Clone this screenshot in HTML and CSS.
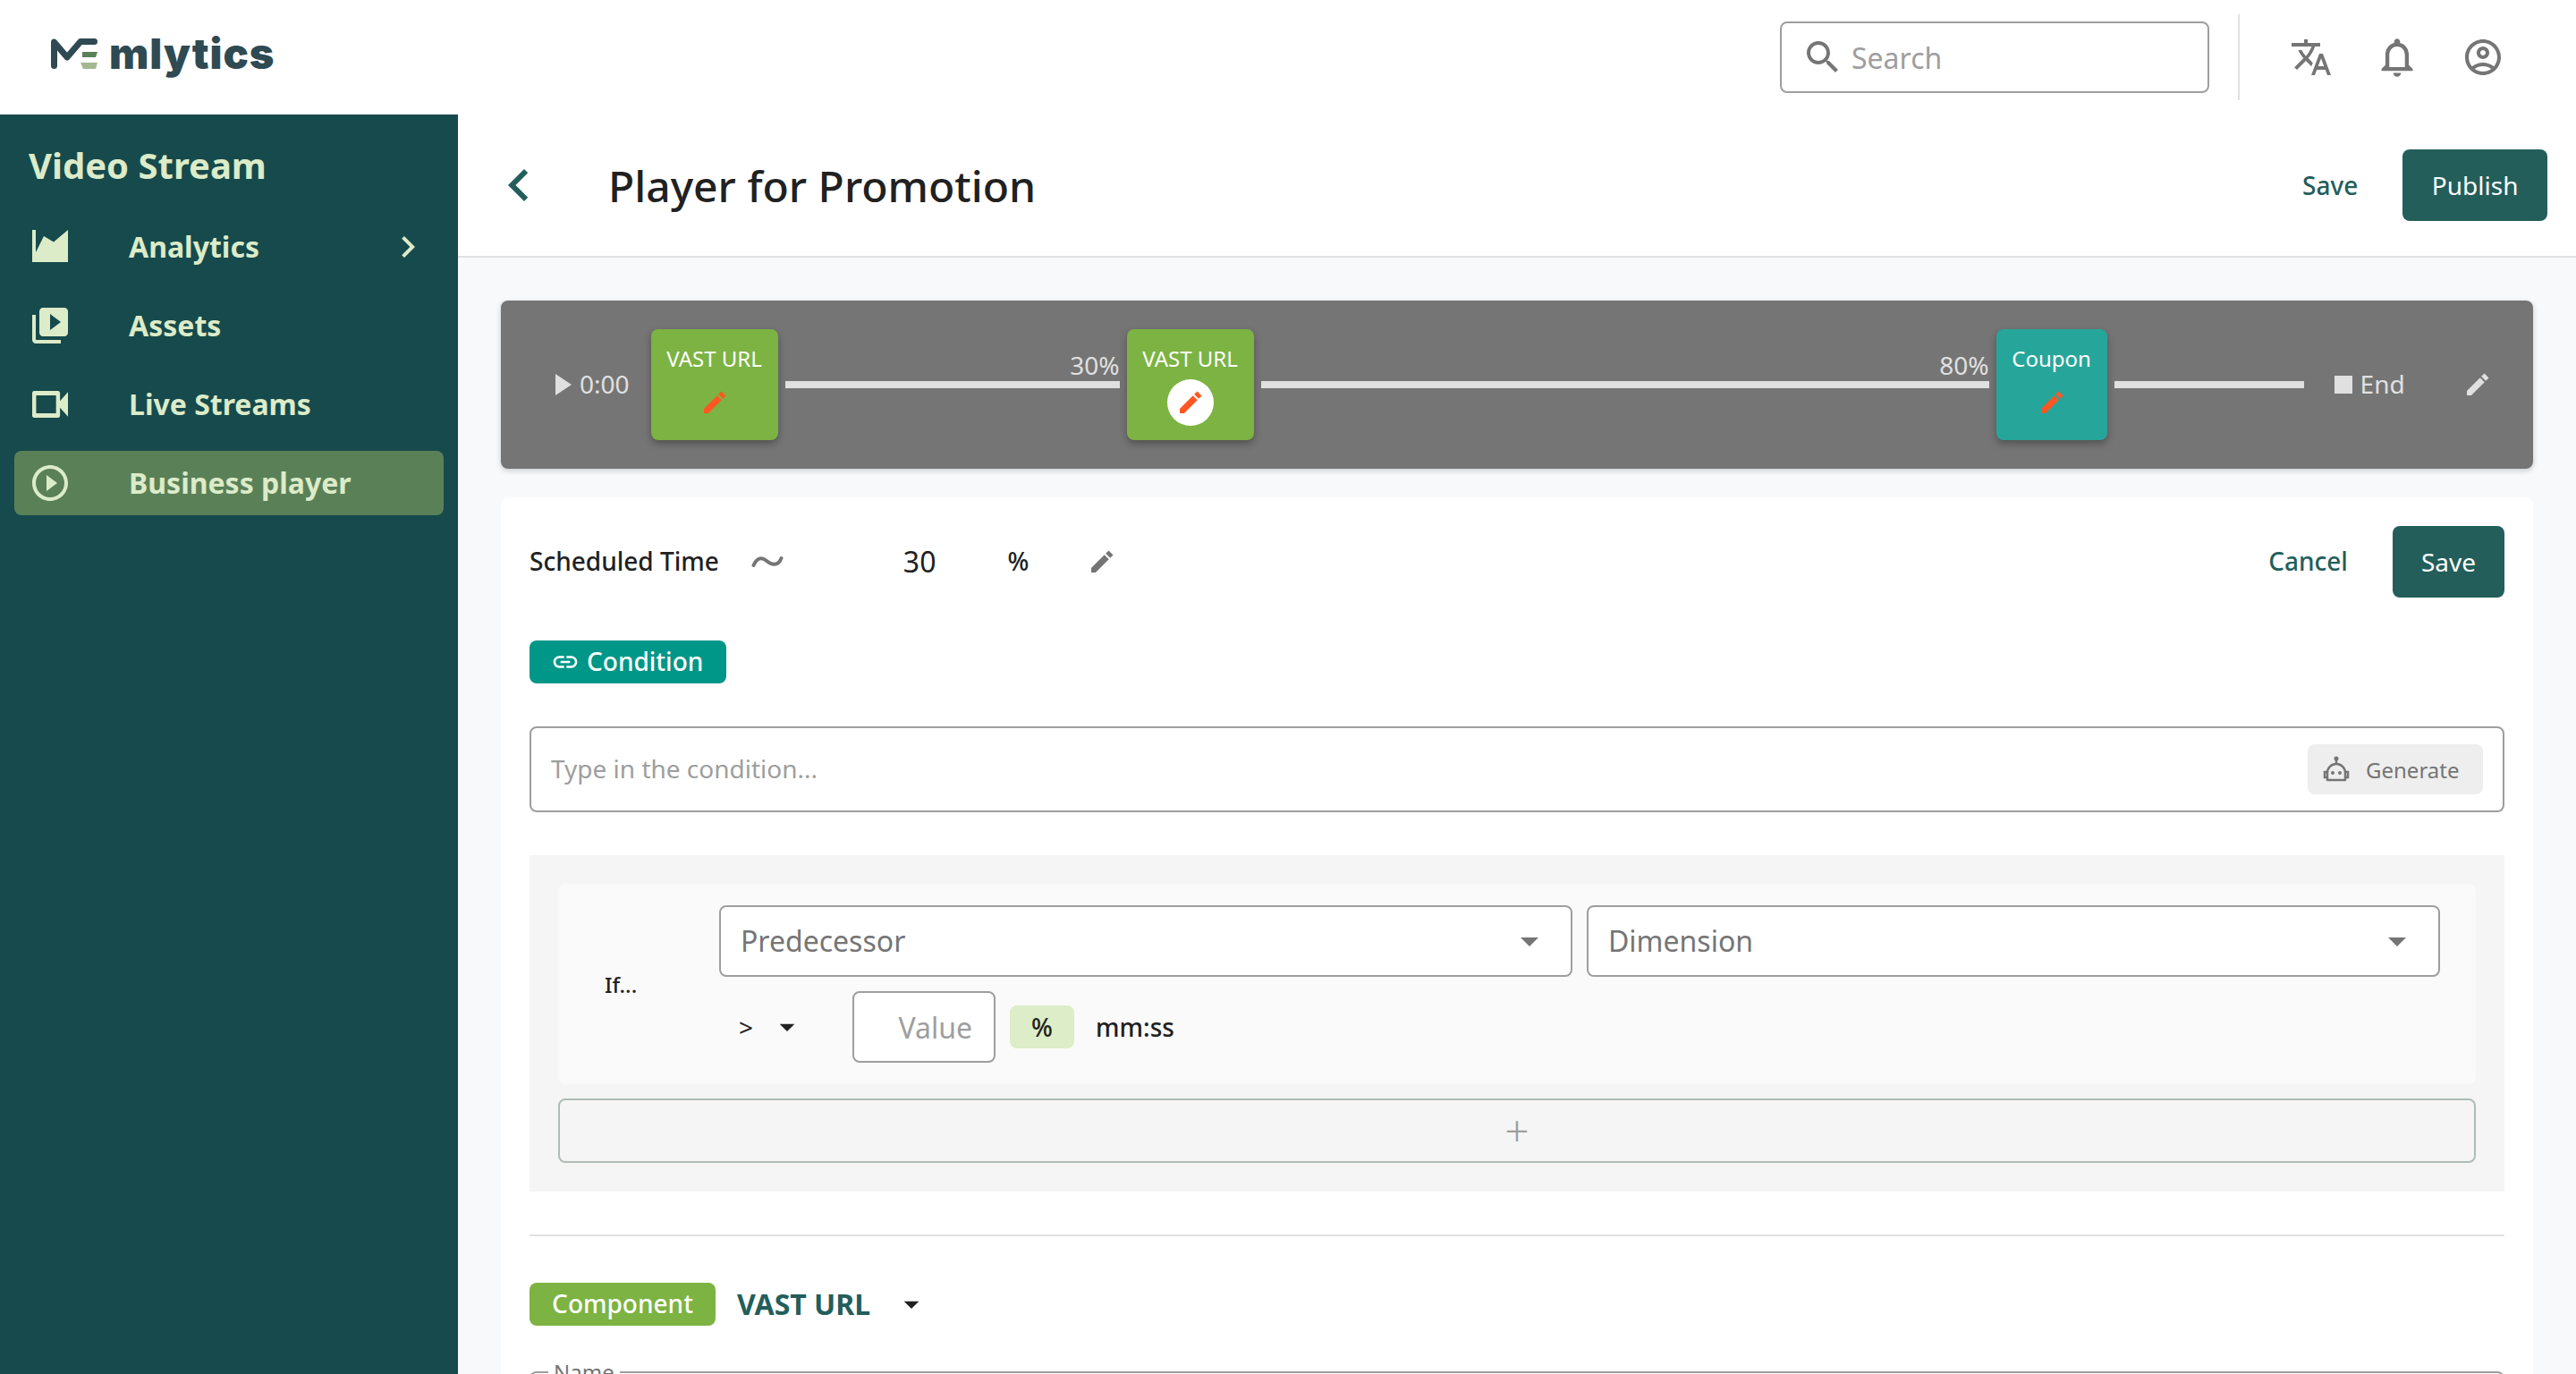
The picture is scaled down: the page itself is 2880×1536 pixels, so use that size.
FILE: index.html
```html
<!DOCTYPE html>
<html lang="en">
<head>
    <meta charset="UTF-8">
    <title>Player for Promotion</title>
    <link rel="stylesheet" href="styles.css">
</head>
<body>
    <header class="topbar">
        <div class="logo">
            <svg class="logo-mark" viewBox="0 0 52 34">
                <path d="M3.500 30.500V4l14.500 17L33 3.500h15.500" fill="none" stroke="#2f4a52" stroke-width="7" stroke-linecap="round" stroke-linejoin="round"/>
                <path d="M35 15h17l-2 6H35z" fill="#5a8058"/>
                <path d="M33 27h19l-2 7H36z" fill="#a5b88f"/>
            </svg>
            <span class="logo-text">mlytics</span>
        </div>
        <div class="topbar-right">
            <div class="search">
                <svg class="icon-48 grey" viewBox="0 0 24 24"><path d="M15.5 14h-.79l-.28-.27C15.41 12.59 16 11.11 16 9.5 16 5.91 13.09 3 9.5 3S3 5.91 3 9.5 5.91 16 9.5 16c1.61 0 3.09-.59 4.23-1.57l.27.28v.79l5 4.99L20.49 19l-4.99-5zm-6 0C7.01 14 5 11.99 5 9.5S7.01 5 9.5 5 14 7.01 14 9.5 11.99 14 9.5 14z"/></svg>
                <input type="text" placeholder="Search">
            </div>
            <div class="topbar-divider"></div>
            <div class="topbar-icons">
                <svg class="icon-48 grey" viewBox="0 0 24 24"><path d="M12.87 15.07l-2.54-2.51.03-.03c1.74-1.94 2.98-4.17 3.71-6.53H17V4h-7V2H8v2H1v1.99h11.17C11.5 7.92 10.44 9.75 9 11.35 8.07 10.32 7.3 9.19 6.69 8h-2c.73 1.63 1.73 3.17 2.98 4.56l-5.09 5.02L4 19l5-5 3.11 3.11.76-2.04zM18.5 10h-2L12 22h2l1.12-3h4.75L21 22h2l-4.5-12zm-2.62 7l1.62-4.33L19.12 17h-3.24z"/></svg>
                <svg class="icon-48 grey" viewBox="1 1 22 22"><path d="M12 22c1.1 0 2-.9 2-2h-4c0 1.1.9 2 2 2zm6-6v-5c0-3.07-1.63-5.64-4.5-6.32V4c0-.83-.67-1.5-1.5-1.5s-1.5.67-1.5 1.5v.68C7.64 5.36 6 7.92 6 11v5l-2 2v1h16v-1l-2-2zm-2 1H8v-6c0-2.48 1.51-4.5 4-4.5s4 2.02 4 4.5v6z"/></svg>
                <svg class="icon-48 grey" viewBox="0 0 24 24"><path d="M12 2C6.48 2 2 6.48 2 12s4.48 10 10 10 10-4.48 10-10S17.52 2 12 2zM7.35 18.5C8.66 17.56 10.26 17 12 17s3.34.56 4.65 1.5c-1.31.94-2.91 1.5-4.65 1.5s-3.34-.56-4.65-1.5zm10.79-1.38C16.45 15.8 14.32 15 12 15s-4.45.8-6.14 2.12C4.7 15.73 4 13.95 4 12c0-4.42 3.58-8 8-8s8 3.58 8 8c0 1.95-.7 3.73-1.86 5.12zM12 6c-1.93 0-3.5 1.57-3.5 3.5S10.07 13 12 13s3.5-1.57 3.5-3.5S13.93 6 12 6zm0 5c-.83 0-1.5-.67-1.5-1.5S11.17 8 12 8s1.5.67 1.5 1.5S12.83 11 12 11z"/></svg>
            </div>
        </div>
    </header>

    <div class="layout">
        <nav class="sidebar">
            <div class="sidebar-title">Video Stream</div>
            <a class="nav-item">
                <svg class="icon-48 pale" viewBox="0 0 48 48"><path d="M4 5h4v25l9-18 11 6.500L44 5v36H4z"/></svg>
                <span class="nav-label">Analytics</span>
                <svg class="icon-48 pale" viewBox="0 0 24 24"><path d="M10 6L8.590 7.410 13.170 12l-4.580 4.590L10 18l6-6z"/></svg>
            </a>
            <a class="nav-item">
                <svg class="icon-48 pale" viewBox="0 0 24 24"><path d="M4 6H2v14c0 1.100.9 2 2 2h14v-2H4V6zm16-4H8c-1.100 0-2 .9-2 2v12c0 1.100.9 2 2 2h12c1.100 0 2-.9 2-2V4c0-1.100-.9-2-2-2zm-8 12.500v-9l6 4.500-6 4.500z"/></svg>
                <span class="nav-label">Assets</span>
            </a>
            <a class="nav-item">
                <svg class="icon-48 pale" viewBox="1.200 2.400 21.600 19.200" preserveAspectRatio="none"><path d="M17 10.500V7c0-.55-.45-1-1-1H4c-.55 0-1 .45-1 1v10c0 .55.45 1 1 1h12c.55 0 1-.45 1-1v-3.500l4 4v-11l-4 4zM15 16H5V8h10v8z"/></svg>
                <span class="nav-label">Live Streams</span>
            </a>
            <a class="nav-item active">
                <svg class="icon-48 pale" viewBox="0 0 24 24"><path d="M10 16.500l6-4.500-6-4.500v9zM12 2C6.480 2 2 6.480 2 12s4.480 10 10 10 10-4.480 10-10S17.520 2 12 2zm0 18c-4.410 0-8-3.590-8-8s3.590-8 8-8 8 3.590 8 8-3.590 8-8 8z"/></svg>
                <span class="nav-label">Business player</span>
            </a>
        </nav>

        <main class="content">
            <div class="page-head">
                <svg class="back-icon" viewBox="0 0 24 24"><path d="M15.410 7.410L14 6l-6 6 6 6 1.410-1.410L10.830 12z"/></svg>
                <h1 class="page-title">Player for Promotion</h1>
                <button class="btn-text btn-save-top">Save</button>
                <button class="btn-primary btn-publish">Publish</button>
            </div>

            <div class="page-body">
                <div class="timeline">
                    <svg class="play-mark" viewBox="0 0 18 24"><path d="M0 0l18 12L0 24z"/></svg>
                    <span class="time-text start-time">0:00</span>
                    <div class="block green block-first">
                        <span class="block-label">VAST URL</span>
                        <span class="block-edit"><svg class="icon-32 orange" viewBox="0 0 24 24"><path d="M3 17.250V21h3.750L17.810 9.940l-3.750-3.750L3 17.250zM21.410 6.340l-3.750-3.750-2.530 2.540 3.750 3.750 2.530-2.540z"/></svg></span>
                    </div>
                    <div class="track track-a"><span class="track-pct">30%</span></div>
                    <div class="block green">
                        <span class="block-label">VAST URL</span>
                        <span class="block-edit selected"><svg class="icon-32 orange" viewBox="0 0 24 24"><path d="M3 17.250V21h3.750L17.810 9.940l-3.750-3.750L3 17.250zM21.410 6.340l-3.750-3.750-2.530 2.540 3.750 3.750 2.530-2.540z"/></svg></span>
                    </div>
                    <div class="track track-b"><span class="track-pct">80%</span></div>
                    <div class="block teal">
                        <span class="block-label">Coupon</span>
                        <span class="block-edit"><svg class="icon-32 orange" viewBox="0 0 24 24"><path d="M3 17.250V21h3.750L17.810 9.940l-3.750-3.750L3 17.250zM21.410 6.340l-3.750-3.750-2.530 2.540 3.750 3.750 2.530-2.540z"/></svg></span>
                    </div>
                    <div class="track track-c"></div>
                    <span class="stop-mark"></span>
                    <span class="time-text">End</span>
                    <svg class="icon-32 timeline-edit" viewBox="0 0 24 24"><path d="M3 17.250V21h3.750L17.810 9.940l-3.750-3.750L3 17.250zM21.410 6.340l-3.750-3.750-2.530 2.540 3.750 3.750 2.530-2.540z"/></svg>
                </div>

                <section class="panel">
                    <div class="schedule-row">
                        <span class="schedule-label">Scheduled Time</span>
                        <svg class="tilde" viewBox="0 0 36 20"><path d="M2.500 14C6 6 11 4 17 9s13 6 16.500-3" fill="none" stroke="#757575" stroke-width="4" stroke-linecap="round"/></svg>
                        <span class="schedule-value">30</span>
                        <span class="schedule-unit">%</span>
                        <svg class="icon-32 grey schedule-edit" viewBox="0 0 24 24"><path d="M3 17.250V21h3.750L17.810 9.940l-3.750-3.750L3 17.250zM21.410 6.340l-3.750-3.750-2.530 2.540 3.750 3.750 2.530-2.540z"/></svg>
                        <button class="btn-text btn-cancel">Cancel</button>
                        <button class="btn-primary">Save</button>
                    </div>

                    <div class="chip-row">
                        <span class="chip chip-condition">
                            <svg class="icon-32 white" viewBox="0 0 24 24"><path d="M3.900 12c0-1.710 1.390-3.100 3.100-3.100h4V7H7c-2.760 0-5 2.240-5 5s2.240 5 5 5h4v-1.900H7c-1.710 0-3.100-1.390-3.100-3.100zM8 13h8v-2H8v2zm9-6h-4v1.900h4c1.710 0 3.100 1.390 3.100 3.100s-1.390 3.100-3.100 3.100h-4V17h4c2.760 0 5-2.240 5-5s-2.240-5-5-5z"/></svg>
                            Condition
                        </span>
                    </div>

                    <div class="condition-input">
                        <input type="text" placeholder="Type in the condition...">
                        <button class="btn-generate">
                            <svg class="robot" viewBox="0 0 32 32">
                                <g fill="none" stroke="#757575" stroke-width="2.500">
                                    <path d="M16 5v5"/>
                                    <path d="M6 28V20a10 10 0 0 1 20 0v8z" stroke-linejoin="round"/>
                                    <path d="M6 19H3v6h3M26 19h3v6h-3"/>
                                </g>
                                <g fill="#757575">
                                    <circle cx="16" cy="4" r="2.500"/>
                                    <circle cx="12" cy="20" r="2"/>
                                    <circle cx="20" cy="20" r="2"/>
                                </g>
                            </svg>
                            Generate
                        </button>
                    </div>

                    <div class="rule-box">
                        <div class="rule-card">
                            <span class="rule-if">If...</span>
                            <div class="rule-fields">
                                <div class="rule-selects">
                                    <div class="select">
                                        <span>Predecessor</span>
                                        <svg class="icon-48 grey" viewBox="0 0 24 24"><path d="M7 10l5 5 5-5z"/></svg>
                                    </div>
                                    <div class="select">
                                        <span>Dimension</span>
                                        <svg class="icon-48 grey" viewBox="0 0 24 24"><path d="M7 10l5 5 5-5z"/></svg>
                                    </div>
                                </div>
                                <div class="rule-compare">
                                    <span class="compare-op">&gt;</span>
                                    <svg class="icon-40 dark" viewBox="0 0 24 24"><path d="M7 10l5 5 5-5z"/></svg>
                                    <input class="value-input" type="text" placeholder="Value">
                                    <span class="unit-chip">%</span>
                                    <span class="unit-text">mm:ss</span>
                                </div>
                            </div>
                        </div>
                        <button class="btn-add">+</button>
                    </div>

                    <hr class="panel-divider">

                    <div class="component-row">
                        <span class="chip chip-component">Component</span>
                        <span class="component-name">VAST URL</span>
                        <svg class="icon-40 dark" viewBox="0 0 24 24"><path d="M7 10l5 5 5-5z"/></svg>
                    </div>

                    <fieldset class="name-field">
                        <legend>Name</legend>
                    </fieldset>
                </section>
            </div>
        </main>
    </div>
</body>
</html>
```

FILE: styles.css
```css
* {
    box-sizing: border-box;
}
html, body {
    height: 100%;
}
body {
    margin: 0;
    overflow: hidden;
    font-family: "Noto Sans", sans-serif;
    font-size: 28px;
    color: #212121;
    background: #fff;
}
input, button {
    font-family: inherit;
}
svg {
    flex: none;
    display: block;
    fill: currentColor;
}
.icon-48 { width: 48px; height: 48px; }
.icon-40 { width: 40px; height: 40px; }
.icon-32 { width: 32px; height: 32px; }
.grey { color: #757575; }
.pale { color: #dcebc8; }
.orange { color: #ff5722; }
.white { color: #fff; }
.dark { color: #212121; }

/* top bar */
.topbar {
    height: 128px;
    display: flex;
    align-items: center;
    justify-content: space-between;
    padding: 0 80px 0 57px;
}
.logo {
    display: flex;
    align-items: center;
    gap: 13px;
    margin-bottom: 8px;
}
.logo-mark {
    width: 52px;
    height: 34px;
}
.logo-text {
    font-family: Inter, sans-serif;
    font-size: 47px;
    font-weight: 900;
    line-height: 44px;
    letter-spacing: 1px;
    color: #2f4a52;
}
.topbar-right {
    display: flex;
    align-items: center;
}
.search {
    width: 480px;
    height: 80px;
    display: flex;
    align-items: center;
    gap: 6px;
    padding: 0 22px;
    border: 2px solid #9e9e9e;
    border-radius: 8px;
}
.search input {
    flex: 1;
    min-width: 0;
    border: none;
    outline: none;
    font-size: 32px;
    background: none;
}
input::placeholder {
    color: #9e9e9e;
    opacity: 1;
}
.topbar-divider {
    width: 2px;
    height: 96px;
    margin: 0 56px 0 32px;
    background: #e0e0e0;
}
.topbar-icons {
    display: flex;
    gap: 48px;
}

/* sidebar */
.layout {
    height: 1408px;
    display: flex;
}
.sidebar {
    width: 512px;
    flex: none;
    padding: 29px 16px 0;
    background: #164a4c;
    color: #dcebc8;
}
.sidebar-title {
    height: 56px;
    margin-bottom: 27px;
    padding-left: 16px;
    font-size: 40px;
    font-weight: 700;
    line-height: 56px;
}
.nav-item {
    height: 72px;
    display: flex;
    align-items: center;
    gap: 64px;
    margin-bottom: 16px;
    padding: 0 16px;
    border-radius: 8px;
}
.nav-item.active {
    background: #5a8058;
}
.nav-label {
    flex: 1;
    padding-bottom: 2px;
    font-size: 32px;
    font-weight: 700;
}

/* page heading */
.content {
    flex: 1;
    min-width: 0;
    display: flex;
    flex-direction: column;
    background: #f8f9fb;
}
.page-head {
    height: 160px;
    flex: none;
    display: flex;
    align-items: center;
    padding: 0 32px;
    background: #fff;
    border-bottom: 2px solid #e0e0e0;
}
.back-icon {
    width: 72px;
    height: 72px;
    color: #235e5b;
}
.page-title {
    flex: 1;
    margin: 0 0 0 64px;
    font-size: 48px;
    font-weight: 500;
}
.btn-primary {
    height: 80px;
    padding: 0 32px;
    border: none;
    border-radius: 8px;
    font-size: 28px;
    color: #fff;
    background: #235e5b;
}
.btn-publish {
    padding: 0 32.5px;
}
.btn-text {
    padding: 0;
    border: none;
    font-size: 28px;
    font-weight: 500;
    color: #235e5b;
    background: none;
}
.btn-save-top {
    margin-right: 50px;
}

/* timeline */
.page-body {
    padding: 48px 48px 0;
}
.timeline {
    height: 188px;
    display: flex;
    align-items: center;
    padding: 0 46px 0 61px;
    border-radius: 8px;
    background: #757575;
    box-shadow: 0 2px 6px rgba(0, 0, 0, 0.2);
}
.play-mark {
    width: 18px;
    height: 24px;
    color: #e0e0e0;
}
.time-text {
    margin-left: 9px;
    padding-bottom: 2px;
    font-size: 28px;
    color: #e0e0e0;
}
.start-time {
    margin-right: 24px;
}
.block {
    width: 142px;
    height: 124px;
    flex: none;
    display: flex;
    flex-direction: column;
    align-items: center;
    padding-top: 15px;
    border-radius: 8px;
    color: #fff;
    box-shadow: 0 4px 8px rgba(0, 0, 0, 0.3);
}
.green { background: #7cb342; }
.teal { background: #26a69a; width: 124px; }
.block-label {
    height: 36px;
    font-size: 24px;
    line-height: 36px;
}
.block-edit {
    width: 52px;
    height: 52px;
    margin-top: 5px;
    display: flex;
    align-items: center;
    justify-content: center;
    border-radius: 50%;
}
.block-edit.selected {
    background: #fff;
}
.track {
    position: relative;
    height: 8px;
    flex: none;
    margin: 0 8px;
    background: #e0e0e0;
}
.track-a { width: 374px; }
.track-b { width: 814px; }
.track-c { width: 212px; }
.track-pct {
    position: absolute;
    right: 0;
    bottom: 8px;
    font-size: 28px;
    line-height: 36px;
    color: #e0e0e0;
}
.stop-mark {
    width: 20px;
    height: 20px;
    margin-left: 26px;
    background: #e0e0e0;
}
.timeline-edit {
    margin-left: auto;
    color: #e0e0e0;
}

/* condition panel */
.panel {
    margin-top: 32px;
    padding: 32px;
    border-radius: 8px;
    background: #fff;
}
.schedule-row {
    height: 80px;
    display: flex;
    align-items: center;
}
.schedule-label, .schedule-value, .schedule-unit, .btn-cancel {
    padding-bottom: 2px;
    font-weight: 500;
}
.schedule-value {
    font-weight: 400;
}
.tilde {
    width: 36px;
    height: 20px;
    margin-left: 36px;
}
.schedule-value {
    margin-left: 134px;
    font-size: 32px;
}
.schedule-unit {
    margin-left: 80px;
}
.schedule-edit {
    margin-left: 66px;
}
.btn-cancel {
    margin-left: auto;
    margin-right: 50px;
}
.chip-row {
    margin-top: 48px;
    display: flex;
}
.chip {
    height: 48px;
    display: flex;
    align-items: center;
    padding-bottom: 2px;
    border-radius: 8px;
    font-size: 28px;
    font-weight: 500;
    color: #fff;
}
.chip-condition {
    gap: 8px;
    padding-left: 24px;
    padding-right: 26px;
    background: #009688;
}
.chip-condition svg {
    margin-top: 2px;
}
.condition-input {
    height: 96px;
    margin-top: 48px;
    display: flex;
    align-items: center;
    padding: 0 22px;
    border: 2px solid #9e9e9e;
    border-radius: 8px;
}
.condition-input input {
    flex: 1;
    min-width: 0;
    padding: 0 0 2px;
    border: none;
    outline: none;
    font-size: 28px;
}
.btn-generate {
    width: 196px;
    height: 56px;
    display: flex;
    align-items: center;
    gap: 17px;
    padding: 0 16px;
    border: none;
    border-radius: 8px;
    font-size: 24px;
    color: #757575;
    background: #eee;
}
.robot {
    width: 32px;
    height: 32px;
}
.rule-box {
    margin-top: 48px;
    padding: 32px;
    background: #f5f5f5;
}
.rule-card {
    display: flex;
    align-items: center;
    padding: 24px 40px 24px 52px;
    border-radius: 8px;
    background: #fafafa;
}
.rule-if {
    width: 128px;
    flex: none;
    font-size: 24px;
    font-weight: 500;
}
.rule-fields {
    flex: 1;
    min-width: 0;
}
.rule-selects {
    display: flex;
    gap: 16px;
}
.select {
    flex: 1;
    height: 80px;
    display: flex;
    align-items: center;
    justify-content: space-between;
    padding: 0 22px 0 22px;
    border: 2px solid #9e9e9e;
    border-radius: 8px;
    font-size: 32px;
    color: #757575;
    background: #fff;
}
.select span {
    padding-bottom: 2px;
}
.rule-compare {
    height: 80px;
    margin-top: 16px;
    display: flex;
    align-items: center;
}
.compare-op {
    margin-left: 22px;
    margin-right: 18px;
    font-size: 28px;
}
.value-input {
    width: 160px;
    height: 80px;
    margin-left: 53px;
    padding: 0 24px 0 0;
    border: 2px solid #9e9e9e;
    border-radius: 8px;
    outline: none;
    text-align: right;
    font-size: 32px;
}
.unit-chip {
    width: 72px;
    height: 48px;
    margin: 0 24px 0 16px;
    display: flex;
    align-items: center;
    justify-content: center;
    border-radius: 8px;
    font-weight: 500;
    background: #dcedc8;
}
.unit-text {
    font-weight: 500;
}
.btn-add {
    width: 100%;
    height: 72px;
    margin-top: 16px;
    display: block;
    padding: 0;
    border: 2px solid #aebdb5;
    border-radius: 8px;
    font-size: 48px;
    font-weight: 300;
    line-height: 48px;
    color: #9e9e9e;
    background: #f5f5f5;
}
.panel-divider {
    height: 2px;
    margin: 48px 0 0;
    border: none;
    background: #e0e0e0;
}
.component-row {
    margin-top: 52px;
    display: flex;
    align-items: center;
}
.chip-component {
    width: 208px;
    justify-content: center;
    background: #7cb342;
}
.component-name {
    margin: 0 26px 0 24px;
    padding-bottom: 2px;
    font-size: 32px;
    font-weight: 700;
    color: #235e5b;
}
.name-field {
    height: 96px;
    margin: 36px 0 0;
    padding: 0;
    border: 2px solid #9e9e9e;
    border-radius: 8px;
}
.name-field legend {
    margin-left: 19px;
    padding: 0 6px;
    font-size: 24px;
    line-height: 32px;
    color: #757575;
}
```
